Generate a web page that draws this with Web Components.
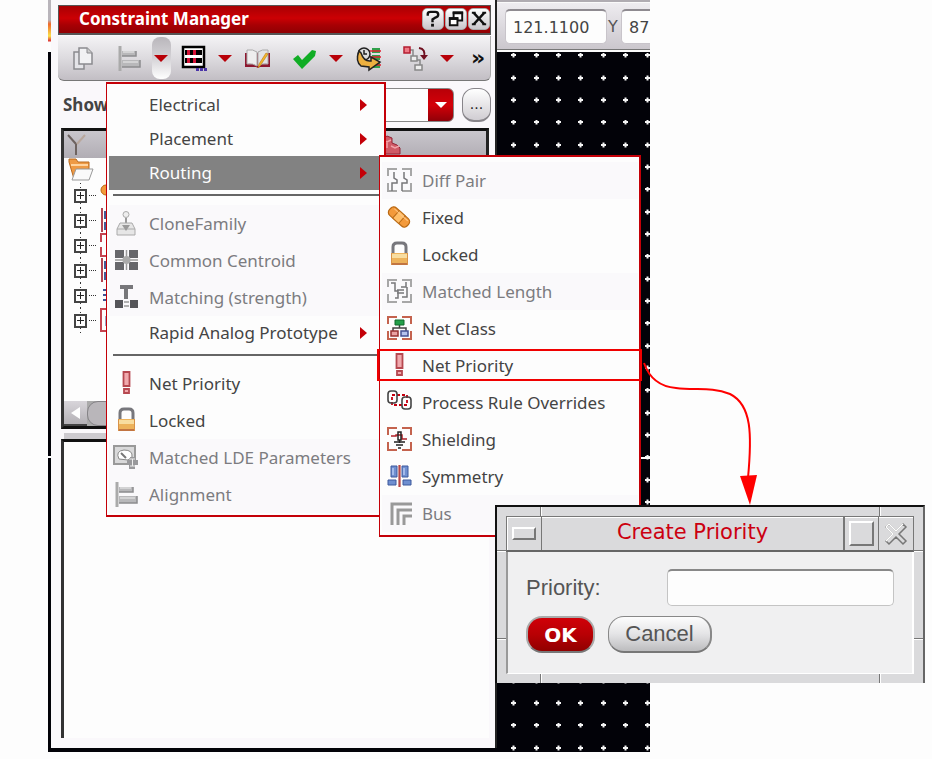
<!DOCTYPE html>
<html lang="en">
<head>
<meta charset="utf-8">
<title>Constraint Manager</title>
<style>
html, body { margin: 0; background: #fdfdfd; }
body { font-family: "Noto Sans", sans-serif; font-size: 17px; line-height: 24px; color: #444; overflow: hidden; }
</style>
</head>
<body>
<app-desktop>
  <constraint-manager slot="manager"></constraint-manager>
  <layout-canvas slot="canvas"></layout-canvas>
  <popup-menu slot="overlay" class="main" aria-label="Constraints">
    <menu-item more>Electrical</menu-item>
    <menu-item more>Placement</menu-item>
    <menu-item more active>Routing</menu-item>
    <menu-rule></menu-rule>
    <menu-item icon="clone" off>CloneFamily</menu-item>
    <menu-item icon="centroid" off>Common Centroid</menu-item>
    <menu-item icon="matching" off>Matching (strength)</menu-item>
    <menu-item more>Rapid Analog Prototype</menu-item>
    <menu-rule></menu-rule>
    <menu-item icon="priority">Net Priority</menu-item>
    <menu-item icon="lock">Locked</menu-item>
    <menu-item icon="lde" off>Matched LDE Parameters</menu-item>
    <menu-item icon="align" off>Alignment</menu-item>
  </popup-menu>
  <popup-menu slot="overlay" class="sub" aria-label="Routing">
    <menu-item icon="diffpair" off>Diff Pair</menu-item>
    <menu-item icon="fixed">Fixed</menu-item>
    <menu-item icon="lock">Locked</menu-item>
    <menu-item icon="matchlen" off>Matched Length</menu-item>
    <menu-item icon="netclass">Net Class</menu-item>
    <menu-item icon="priority" marked>Net Priority</menu-item>
    <menu-item icon="process">Process Rule Overrides</menu-item>
    <menu-item icon="shield">Shielding</menu-item>
    <menu-item icon="symmetry">Symmetry</menu-item>
    <menu-item icon="bus" off>Bus</menu-item>
  </popup-menu>
  <callout-arrow slot="overlay"></callout-arrow>
  <priority-dialog slot="overlay"></priority-dialog>
</app-desktop>

<script>
const corners = (a, b) => `<path d="M1 8V1H10M15 1H24V8" fill="none" stroke="${a}" stroke-width="2"/><path d="M1 15V23H10M15 23H24V15" fill="none" stroke="${b}" stroke-width="2"/>`;
const ICONS = {
  copy: `<path d="M4 6h10v17H4z" fill="#e4e4e8" stroke="#8a8a8e" stroke-width="1.5"/><path d="M9 2h8l5 5v11H9z" fill="#f2f2f4" stroke="#8a8a8e" stroke-width="1.5"/><path d="M17 2v5h5" fill="#ccc" stroke="#8a8a8e"/>`,
  align: `<path d="M3 0v25" stroke="#aaa" stroke-width="3"/><path d="M5 5h14v5H5zM5 14h18v7H5z" fill="#b8b8ba"/><path d="M5 10h14V5M5 21h18v-7" fill="none" stroke="#8c8c8e" stroke-width="1.5"/><path d="M6 16h15M6 6h11" stroke="#eee"/>`,
  film: `<path d="M2 1h21v20H2z" fill="#fff" stroke="#000" stroke-width="2.5"/><path d="M4 4h17v5H4zM4 12h17v5H4z" fill="#000"/><path d="M6 4h3v5H6zM12 4h3v5h-3zM6 12h3v5H6zM12 12h3v5h-3z" fill="#d41236"/><path d="M15 23.500h11" stroke="#4a35a8" stroke-width="3" stroke-dasharray="3 1"/>`,
  book: `<path d="M0 7v14h11l2 1 2-1h10V7" fill="#8e1830"/><path d="M2 4q6-1 10 2v14q-4-3-10-2z" fill="#eee" stroke="#aaa"/><path d="M23 4q-6-1-10 2v14q4-3 10-2z" fill="#e2e2e4" stroke="#aaa"/><path d="M23 8l-8 12-2 2 1-4 7-11z" fill="#f3b62b" stroke="#b87810" stroke-width=".6"/>`,
  check: `<path d="M1 13l5-4 4 5L20 4l4 1-1 5-13 13z" fill="#11ad25"/>`,
  clock: `<path d="M16 2h8v5h-8zM16 9h8v5h-8zM16 17h8v5h-8z" fill="#30a04a"/><path d="M12 5h13M14 11h11M16 19h9" stroke="#e02030" stroke-width="1.500"/><circle cx="8" cy="8" r="6" fill="#ddd" stroke="#222" stroke-width="1.500"/><path d="M8 4v4h3" fill="none" stroke="#222" stroke-width="1.500"/><path d="M3 5Q-1 15 5 20l8 1v3l11-8-9-5v4Q8 16 5 7z" fill="#edb040" stroke="#222" stroke-width="1.500"/>`,
  flow: `<path d="M5 4h5v7h4M13 14h4v5" fill="none" stroke="#888" stroke-width="1.500"/><path d="M1 1h6v6H1z" fill="#ee7884" stroke="#b41c30" stroke-width="1.500"/><path d="M8 10h6v5H8zM12 19h7v5h-7z" fill="#eee" stroke="#888" stroke-width="1.500"/><path d="M16 2q7 1 5 9" fill="none" stroke="#701020" stroke-width="2"/><path d="M17 9h8l-4 5z" fill="#701020"/>`,
  clone: `<circle cx="12" cy="3.500" r="3" fill="#eee" stroke="#aaa"/><path d="M12 7v8" stroke="#999" stroke-width="2"/><path d="M6 12h12l3 6v6H3v-6z" fill="#e6e6e6" stroke="#aaa"/><path d="M3 18h18" stroke="#aaa"/><path d="M8 14h8l-4 6z" fill="#999"/>`,
  centroid: `<path d="M1 2h9v8H1zM15 2h9v8h-9zM1 14h9v8H1zM15 14h9v8h-9z" fill="#66666a"/><path d="M12.500 2v20M1 12h23" stroke="#999" stroke-width="1.500"/><circle cx="12.500" cy="12" r="4" fill="#aaa"/>`,
  matching: `<path d="M6 0h13v4h-5v10h-4V4H6z" fill="#77777a"/><path d="M1 15h8v8H1zM16 15h8v8h-8z" fill="#555559"/><path d="M10 17h5M10 21h5" stroke="#999" stroke-width="1.500"/>`,
  priority: `<path d="M9.500 1h6v14h-6zM10 18h5v4h-5z" fill="#f0a9ad" stroke="#b64850" stroke-width="1.800"/>`,
  lock: `<path d="M6 12V5q0-4 4-4h5q4 0 4 4v7" fill="none" stroke="#77777c" stroke-width="3"/><path d="M4 11h17v12H4z" fill="#edb35c"/><path d="M5 12h15v4H5z" fill="#f8dda0"/><path d="M4 22h17" stroke="#c27542" stroke-width="2"/><path d="M4.500 11v12M20.500 11v12" stroke="#d89248"/>`,
  lde: `<path d="M0 1h21v18H0z" fill="#d9d9da" stroke="#999" stroke-width="2"/><path d="M5 14q-4-8 5-9 9 0 8 7l-4 3z" fill="#fff" stroke="#888"/><path d="M7 8l5 5" stroke="#777" stroke-width="2"/><path d="M16 12h5v3h3v5h-3v4h-6v-4h-2v-5h3z" fill="#99999c"/><path d="M18.500 14v7M16 14h5M16 21h5" stroke="#eee"/>`,
  diffpair: corners("#a7a7a7", "#a7a7a7") + `<path d="M7 4v6l3 2v3H5v8M17 4v6l3 2v3h-5v8" fill="none" stroke="#77777a" stroke-width="1.500"/>`,
  matchlen: corners("#a7a7a7", "#a7a7a7") + `<path d="M4 4h4v8h3v7H8M19 3v5h-5M20 8v10h-5M10 11h7M10 14h7" fill="none" stroke="#77777a" stroke-width="1.500"/>`,
  fixed: `<g transform="rotate(42 12 12)"><rect x="0" y="7" width="24" height="10" rx="4" fill="#f39a3b" stroke="#b96914" stroke-width="1.200"/><path d="M8 7h8v10H8z" fill="#ffbe68" stroke="#b96914"/><path d="M3 9h18" stroke="#ffc98a"/></g>`,
  netclass: corners("#c4634e", "#c4634e") + `<path d="M12.500 8v4M6 15v-3h13v3" fill="none" stroke="#444" stroke-width="1.500"/><path d="M8 4h9v5H8z" fill="#23a04a" stroke="#0e6a2a"/><path d="M4 15h7v5H4z" fill="#e9a2a2" stroke="#973030" stroke-width="1.500"/><path d="M14 15h7v5h-7z" fill="#b5c3ee" stroke="#445094" stroke-width="1.500"/>`,
  process: `<path d="M5 5h15v10H5z" fill="none" stroke="#c40010" stroke-width="1.800" stroke-dasharray="3 2"/><rect x="1" y="1" width="9" height="12" rx="3" fill="none" stroke="#444" stroke-width="1.600"/><rect x="15" y="7" width="9" height="12" rx="3" fill="none" stroke="#444" stroke-width="1.600"/>`,
  shield: corners("#c4634e", "#c4634e") + `<path d="M4 9h5v-1h6v4h5" fill="none" stroke="#b02028" stroke-width="1.500"/><path d="M11 5h3v8h-3zM12.500 13v3M7 15h11M9 18h7M11 21h3" fill="none" stroke="#222" stroke-width="1.500"/>`,
  symmetry: `<path d="M4 2h6v11H4zM15 2h6v11h-6zM1 16h8v5H1zM16 16h8v5h-8z" fill="#6f8fd0" stroke="#3d589c"/><path d="M6 4v7M17 4v7" stroke="#b5c9f2" stroke-width="1.500"/><path d="M12.500 1v22" stroke="#b84646" stroke-width="2.200"/>`,
  bus: `<path d="M5 24V3h20M11 24V9h14M17 24v-9h8" fill="none" stroke="#999" stroke-width="3"/>`,
  filter: `<path d="M4 3l8 9v11" fill="none" stroke="#6e6360" stroke-width="2"/><path d="M21 3l-8 9" stroke="#b9a79c" stroke-width="2"/>`,
  folder: `<path d="M1 4V1h7l2 3h11v8L6 21z" fill="#ee9a45" stroke="#b86a20"/><path d="M3 7h17" stroke="#ffd4a0" stroke-width="2"/><path d="M8 11h17l-4 11H4z" fill="#fafafa" stroke="#999"/>`,
  cubes: `<path d="M0 3l4-3 5 2v5l5 2 3 3v6H0z" fill="#cf5a66" stroke="#922436"/><path d="M1 4l3 2 4-2M8 10l4 2 4-2M4 6v6" fill="none" stroke="#f2a2a8" stroke-width="1.500"/>`,
  help: `<path d="M5 7V5q0-2 3-2h5q3 0 3 3 0 2-3 3l-3 2v3" fill="none" stroke="#111" stroke-width="2.500"/><path d="M8.500 17h3" stroke="#111" stroke-width="3"/>`,
  restore: `<path d="M8 4h9v8H8z" fill="#fff" stroke="#111" stroke-width="2"/><path d="M7 4h11" stroke="#111" stroke-width="3"/><path d="M4 10h8v7H4z" fill="#fff" stroke="#111" stroke-width="2"/><path d="M3 10h10" stroke="#111" stroke-width="3"/>`,
  close: `<path d="M5 4l11 12M16 4L5 16" stroke="#111" stroke-width="2.600"/><path d="M3 4h4M14 4h4M3 16h4M14 16h4" stroke="#111" stroke-width="2"/>`
};
const define = (name, css, html, setup) => customElements.define(name, class extends HTMLElement {
  connectedCallback() {
    if (this.shadowRoot) return;
    const root = this.attachShadow({ mode: "open" });
    root.innerHTML = `<style>*{box-sizing:border-box}button,input,select{font:inherit;color:inherit;margin:0;padding:0;border:0;background:none}${css}</style>${typeof html === "function" ? html(this) : html}`;
    if (setup) setup(this, root);
  }
});

define("ui-icon", `:host{display:block;width:25px;height:25px;flex:none}svg{display:block;width:100%;height:100%;overflow:visible}`,
  el => `<svg viewBox="${el.getAttribute("box") || "0 0 25 25"}" aria-hidden="true">${ICONS[el.getAttribute("name")]}</svg>`);

define("app-desktop", `
  :host{display:grid;position:relative;grid-template-columns:48fr 449fr 153fr 282fr;min-height:100vh;padding-bottom:7px;box-sizing:border-box}
  ::slotted([slot=manager]){grid-column:2}
  ::slotted([slot=canvas]){grid-column:3}
  ::slotted([slot=overlay]){position:absolute}
  ::slotted(.main){left:106px;top:82px;width:280px}
  ::slotted(.sub){left:379px;top:155px;width:262px}
  ::slotted(callout-arrow){left:640px;top:355px}
  ::slotted(priority-dialog){left:495px;top:505px;width:430px}
`, `<slot name="manager"></slot><slot name="canvas"></slot><slot name="overlay"></slot>`);

define("layout-canvas", `
  :host{display:flex;flex-direction:column;background:#020208;min-width:0;overflow:hidden}
  .bar{flex:none;height:52px;padding:8px 0 7px 8px;display:flex;gap:1px;align-items:center;background:linear-gradient(#b0acb2 0 2px,#fafafa 2px 3px,#eeecf0 3px,#cbc7cd 49px,#777 49px 50px,#fafafa 50px);overflow:hidden}
  input{font:16px/24px "DejaVu Sans",sans-serif;color:#444;flex:none;width:102px;height:35px;padding:0 7px;background:#fdfdfd;border:1px solid #c8c4ca;border-top:2px solid #8e8a90;border-radius:5px}
  label{font:16px/24px "DejaVu Sans",sans-serif;width:12px;flex:none;color:#555}
  svg{flex:1;width:100%;min-height:0;display:block}
`, `
  <div class="bar"><input aria-label="X" value="121.1100"><label for="y">Y</label><input id="y" value="87"></div>
  <svg aria-hidden="true"><defs><pattern id="g" x="13" y="1" width="67" height="67" patternUnits="userSpaceOnUse">
  <path stroke="#f4f4f4" stroke-width="2" d="${[3, 26, 48].map(x => [2, 25, 47].map(y => `M${x - 2} ${y}h5M${x + .5} ${y - 2.500}v5`).join("")).join("")}"/></pattern></defs>
  <rect width="100%" height="100%" fill="url(#g)"/><path d="M143 406h10" stroke="#fff" stroke-width="2"/></svg>`);

define("title-bar", `
  :host{display:flex;align-items:center;gap:1px;height:30px;padding:0 0 2px 20px;border:1px solid #555;border-bottom-width:2px;background:linear-gradient(#a80004,#cc0004 45%,#a80004 70%,#900003);color:#fff;box-sizing:border-box}
  h1{margin:0;font-size:17px;font-weight:700;line-height:24px;flex:1;white-space:nowrap}
  button{width:22px;height:22px;border-radius:5px;border:1px solid #aaa;background:linear-gradient(#fff,#c9c6cb)}
  ui-icon{width:20px;height:20px}
`, `<h1><slot></slot></h1>
  <button aria-label="Help"><ui-icon name="help" box="0 0 21 21"></ui-icon></button><button aria-label="Restore"><ui-icon name="restore" box="0 0 21 21"></ui-icon></button><button aria-label="Close"><ui-icon name="close" box="0 0 21 21"></ui-icon></button>`);

define("tool-button", `
  :host{display:block;flex:none;width:32px}
  button{width:100%;height:42px;display:grid;place-items:center}
  .tri{width:0;height:0;border:7px solid transparent;border-top:7px solid #b80008;border-bottom:0}
  :host([drop]) button{width:19px;margin:0 auto;border-radius:8px}
  :host([pressed]) button{background:linear-gradient(#b9b6bb,#d4d2d6 50%,#fff)}
`, el => `<button aria-label="${el.title || el.getAttribute("label")}">${el.hasAttribute("drop") ? '<span class="tri"></span>' : `<ui-icon name="${el.getAttribute("name")}"></ui-icon>`}</button>`);

define("tool-strip", `
  :host{display:flex;align-items:center;height:45px;padding:0 0 0 8px;margin-top:1px;background:linear-gradient(#f4f3f5,#dddbdf 50%,#c2bec4);border-bottom:1px solid #777;border-right:1px solid #aaa;border-radius:0 0 6px 6px;box-sizing:border-box}
  .gap{width:15px;flex:none}
  .more{margin-left:auto;width:24px;height:42px;font:700 22px/24px "DejaVu Sans",sans-serif;color:#111}
`, `<tool-button name="copy" label="Copy"></tool-button><span class="gap"></span>
  <tool-button name="align" label="Create constraint"></tool-button><tool-button drop pressed label="Constraint types"></tool-button><tool-button name="film" label="Groups"></tool-button><tool-button drop label="Group types"></tool-button><tool-button name="book" label="Notes"></tool-button><span class="gap"></span>
  <tool-button name="check" label="Validate"></tool-button><tool-button drop label="Validate options"></tool-button><tool-button name="clock" label="Transfer"></tool-button><span class="gap"></span>
  <tool-button name="flow" label="Propagate"></tool-button><tool-button drop label="Propagate options"></tool-button><button class="more" aria-label="More tools">»</button>`);

define("show-row", `
  :host{display:flex;align-items:center;gap:8px;height:47px;padding:0 0 0 5px}
  label{font-weight:700;color:#444}
  select{appearance:none;flex:1;height:34px;border:1px solid #888;border-radius:6px;background:linear-gradient(#b80008,#d40008 50%,#900008) right/25px 100% no-repeat #fdfdfd}
  .pick{position:relative;flex:1;display:flex}
  .pick::after{content:"";position:absolute;right:7px;top:14px;border:6px solid transparent;border-top-color:#fff;border-bottom:0;pointer-events:none}
  button{width:29px;height:34px;border:1px solid #88858a;border-bottom-width:2px;border-radius:12px;background:linear-gradient(#fff,#d0cdd2);font:14px/24px "DejaVu Sans",sans-serif;color:#222}
`, `<label for="s">Show</label><span class="pick"><select id="s"><option></option></select></span><button>...</button>`);

define("tree-row", `
  :host{display:flex;align-items:center;height:25px;padding-left:10px;gap:13px;background:repeating-linear-gradient(#333 0 1px,transparent 1px 4px) 16px 0/1px 100% no-repeat}
  :host([root]){padding-left:4px;background:none}
  button{width:13px;height:14px;border:2px solid #444;background:linear-gradient(#222,#222) center/7px 1px no-repeat,linear-gradient(#222,#222) center/1px 7px no-repeat,#fdfdfd;position:relative}
  button::after{content:"";position:absolute;left:13px;top:4px;width:7px;border-top:1px dotted #333}
  svg{width:25px;height:25px;flex:none}
`, el => el.hasAttribute("root") ? `<ui-icon name="folder"></ui-icon>` :
  `<button aria-label="Expand"></button><svg viewBox="0 0 25 25" aria-hidden="true">${{
    dot: '<circle cx="6" cy="7" r="5" fill="#f39a3b" stroke="#b96914"/>',
    bars: '<path d="M2 0v24" stroke="#b24450" stroke-width="2"/><path d="M6 3v8M6 14v8" stroke="#465a94" stroke-width="4"/>',
    frame: '<path d="M8 1H1v8M1 14v9h8" fill="none" stroke="#c44450" stroke-width="2"/>',
    lines: '<path d="M3 7h8M3 12h8M3 17h8" stroke="#405594" stroke-width="2"/>',
    both: '<path d="M8 1H1v22h8" fill="none" stroke="#c44450" stroke-width="2"/><path d="M7 8v10" stroke="#405594" stroke-width="3"/>'
  }[el.getAttribute("kind")]}</svg>`);

define("constraint-tree", `
  :host{display:flex;flex-direction:column;height:301px;border:3px solid #222;border-color:#111 #222 #111 #333;background:#fdfdfd;box-sizing:border-box}
  .head{display:flex;align-items:center;justify-content:space-between;height:27px;flex:none;padding:0 86px 0 0;background:linear-gradient(#c9c6cc,#b1adb4)}
  .rows{flex:1}
  .scroll{display:flex;height:25px;background:#aaa}
  .scroll button{width:23px;background:linear-gradient(#d8d5da,#b4b1b6);border-bottom:2px solid #444;display:grid;place-items:center}
  .scroll button::before{content:"";border:6px solid transparent;border-right:9px solid #fff;border-left:0}
  .thumb{flex:1;border-radius:11px;background:#b9b6ba;border:1px solid #858387}
  .head ui-icon:last-child{width:17px;height:20px}
`, `<div class="head"><ui-icon name="filter"></ui-icon><ui-icon name="cubes" box="0 0 17 18"></ui-icon></div>
  <div class="rows"><tree-row root></tree-row><tree-row kind="dot"></tree-row><tree-row kind="bars"></tree-row><tree-row kind="frame"></tree-row><tree-row kind="bars"></tree-row><tree-row kind="lines"></tree-row><tree-row kind="both"></tree-row></div>
  <div class="scroll"><button aria-label="Scroll left"></button><span class="thumb"></span></div>`);

define("constraint-manager", `
  :host{display:flex;flex-direction:column;padding:5px 6px 10px 10px;border-bottom:4px solid #020208;background:
    linear-gradient(#b9b5bb 3px,#b9b5bb 20px,#f0682a 24px,#fbe34a 36px,#d33 41px,#fdfdfd 42px,#fdfdfd 52px,#020208 52px,#020208 456px,#fdfdfd 456px,#fdfdfd 458px,#020208 458px) left/3px 100% no-repeat,
    linear-gradient(#222,#222) right/2px 100% no-repeat,#faf8fb;box-sizing:border-box}
  constraint-tree{margin:0 2px 0 3px}
  .detail{flex:1;margin:10px 2px 0 3px;border-top:3px solid #111;border-left:3px solid #333;background:#fdfdfd;box-shadow:0 -9px 0 -3px #cdcacf}
`, `<title-bar>Constraint Manager</title-bar><tool-strip></tool-strip><show-row></show-row><constraint-tree></constraint-tree><div class="detail"></div>`);

define("popup-menu", `:host{display:block;padding:4px 2px 2px;border:2px solid #c40008;border-width:2px 2px 2px 1px;background:#fdfdfd;box-sizing:border-box}
  :host(.sub){padding:5px 1px 3px 2px}
`, `<slot></slot>`, el => el.setAttribute("role", "menu"));

define("menu-rule", `:host{display:block;height:15px;padding:4px 2px 0 4px;box-sizing:border-box}hr{margin:0;border:0;height:2px;background:#666}`, `<hr>`);

define("menu-item", `
  :host{display:block;position:relative}
  button{display:flex;align-items:center;width:100%;height:34px;padding:0 15px 0 5px;gap:10px;text-align:left;white-space:nowrap}
  :host([icon]) button{height:37px}
  :host([off]) button{color:#7c7c80;background:#faf9fb}
  :host([active]) button{background:#828282;color:#fdfdfd}
  .icon{width:25px;height:25px;flex:none}
  .text{flex:1}
  .arrow{border:6px solid transparent;border-left:7px solid #c40008;border-right:0}
  :host([marked])::after{content:"";position:absolute;inset:2px -4px 3px -5px;border:2px solid #f00000}
`, el => `<button role="menuitem"${el.hasAttribute("off") ? " disabled" : ""}><span class="icon">${el.hasAttribute("icon") ? `<ui-icon name="${el.getAttribute("icon")}"></ui-icon>` : ""}</span><span class="text"><slot></slot></span>${el.hasAttribute("more") ? '<span class="arrow"></span>' : ""}</button>`);

define("callout-arrow", `:host{display:block;width:120px;height:150px;pointer-events:none}svg{display:block}`,
  `<svg width="120" height="150" viewBox="640 355 120 150" aria-hidden="true"><path d="M644 363Q652 386 676 388C695 391 710 386 730 394C752 405 752 435 748 478" fill="none" stroke="#f00" stroke-width="2"/><path d="M740 476l17-1-7 30z" fill="#f00"/></svg>`);

define("priority-dialog", `
  :host{display:block;border:solid #111;border-width:2px 2px 0;border-right-color:#666;padding:9px 9px 9px;box-sizing:border-box;
    background:
    linear-gradient(90deg,#777 1px,#fff 1px) 43px 0/2px 9px no-repeat,
    linear-gradient(90deg,#777 1px,#fff 1px) 382px 0/2px 9px no-repeat,
    linear-gradient(90deg,#777 1px,#fff 1px) 43px 100%/2px 9px no-repeat,
    linear-gradient(90deg,#777 1px,#fff 1px) 382px 100%/2px 9px no-repeat,
    linear-gradient(#777 1px,#fff 1px) 0 43px/100% 2px no-repeat,
    linear-gradient(#777 1px,#fff 1px) 0 131px/100% 2px no-repeat,#dadadc}
  header{display:flex;height:36px;border:1px solid #777;border-bottom:2px solid #666;box-shadow:inset 1px 1px #fff}
  header button{width:34px;display:grid;place-items:center;flex:none}
  h2{flex:1;margin:0;border:solid #777;border-width:0 2px 0 1px;font:400 21px/30px "DejaVu Sans",sans-serif;color:#cc0010;text-align:center;white-space:nowrap}
  .min::before{content:"";width:20px;height:9px;border:2px solid #fff;border-right-color:#777;border-bottom-color:#777}
  .max{border-right:1px solid #777}
  .max::before{content:"";width:21px;height:21px;border:2px solid #fff;border-right-color:#777;border-bottom-color:#777}
  form{padding:17px 18px 20px;background:#f0f0f1;border-left:2px solid #999;border-right:2px solid #fff;border-bottom:1px solid #fff;font:22px/26px "Liberation Sans",sans-serif;color:#555}
  .row{display:flex;justify-content:space-between;align-items:center}
  input{width:227px;height:37px;padding:0 8px;background:#fdfdfd;border:1px solid #c4c4c4;border-top:2px solid #888;border-radius:5px}
  .actions{display:flex;gap:13px;margin-top:10px}
  .actions button{height:37px;border-radius:16px}
  .cancel{width:104px;border:1px solid #888;border-bottom:2px solid #777;border-right:2px solid #888;background:linear-gradient(#fdfdfd,#e4e4e6 50%,#bcbcbe)}
  .ok{width:69px;border:2px solid #aaa;border-bottom-color:#777;background:linear-gradient(#d00008,#b80004 50%,#900000);color:#fff;font:700 20px/26px "DejaVu Sans",sans-serif}
`, `<header><button class="min" aria-label="Window menu"></button><h2>Create Priority</h2><button class="max" aria-label="Maximize"></button><button aria-label="Close"><svg width="24" height="24" viewBox="0 0 24 24" aria-hidden="true"><path d="M2 5l3-3 7 7 7-7 3 3-7 7 7 7-3 3-7-7-7 7-3-3 7-7z" fill="#dadadc" stroke="#777" stroke-width="1.500"/><path d="M2 5l3-3 7 7 7-7M2 19l7-7-7-7" fill="none" stroke="#fff" stroke-width="1.500"/></svg></button></header>
  <form><div class="row"><label for="p">Priority:</label><input id="p" type="text"></div><div class="actions"><button class="ok" type="button">OK</button><button class="cancel" type="button">Cancel</button></div></form>`);
</script>
</body>
</html>
